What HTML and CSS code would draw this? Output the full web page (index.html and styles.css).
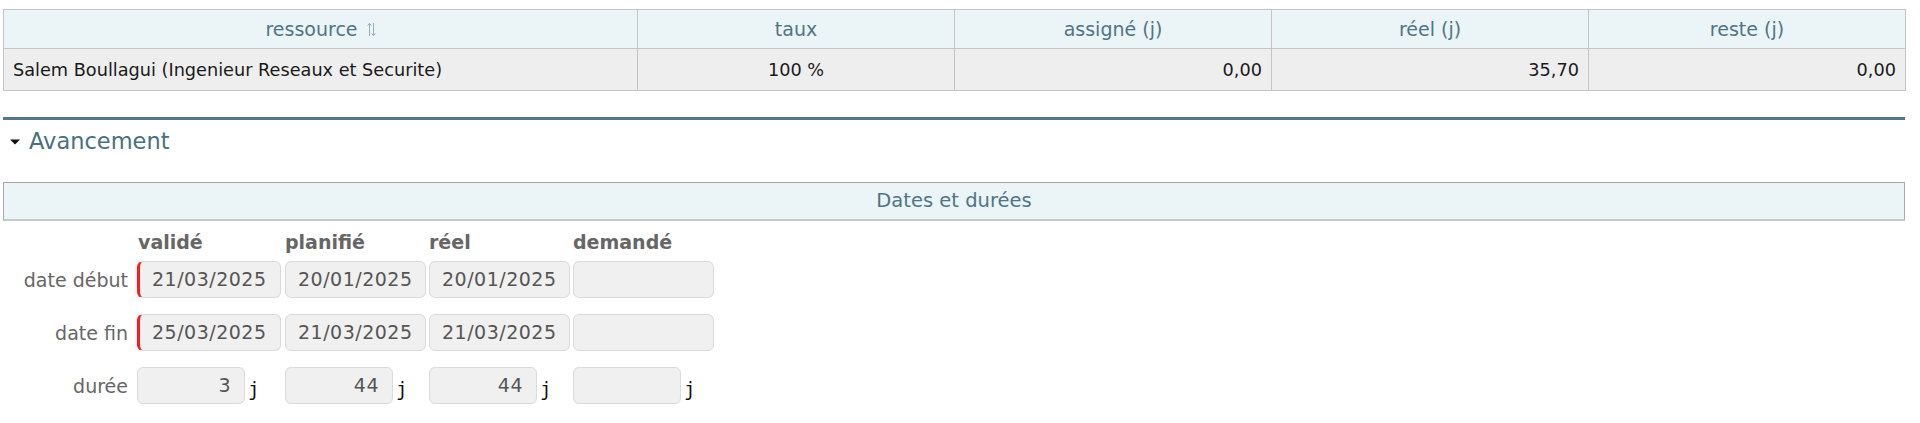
FILE: index.html
```html
<!DOCTYPE html>
<html lang="fr">
<head>
<meta charset="utf-8">
<title>Avancement</title>
<link rel="stylesheet" href="styles.css">
</head>
<body>
<div class="page">
  <table class="res">
    <thead>
      <tr>
        <th class="c-res">ressource<svg class="sort" width="9" height="15" viewBox="0 0 9 15"><path d="M2.5 1.5V14M0.6 3.6L2.5 1.3L4.4 3.6M6.5 1V13.5M4.6 11.4L6.5 13.7L8.4 11.4" fill="none" stroke="#98b0bb" stroke-width="1"/></svg></th>
        <th>taux</th>
        <th>assigné (j)</th>
        <th>réel (j)</th>
        <th>reste (j)</th>
      </tr>
    </thead>
    <tbody>
      <tr>
        <td class="left">Salem Boullagui (Ingenieur Reseaux et Securite)</td>
        <td class="center">100 %</td>
        <td class="right">0,00</td>
        <td class="right">35,70</td>
        <td class="right">0,00</td>
      </tr>
    </tbody>
  </table>

  <div class="sep"></div>

  <h2 class="section"><svg class="caret" width="10" height="6" viewBox="0 0 10 6"><polygon points="0,0.5 10,0.5 5,5.5" fill="#111"/></svg>Avancement</h2>

  <div class="boxhead">Dates et durées</div>

  <div class="form">
    <div class="frow head">
      <span></span>
      <span class="colh first">validé</span>
      <span class="colh">planifié</span>
      <span class="colh">réel</span>
      <span class="colh">demandé</span>
    </div>
    <div class="frow">
      <span class="lbl">date début</span>
      <span class="cell"><span class="inp date req">21/03/2025</span></span>
      <span class="cell"><span class="inp date">20/01/2025</span></span>
      <span class="cell"><span class="inp date">20/01/2025</span></span>
      <span class="cell"><span class="inp date"></span></span>
    </div>
    <div class="frow">
      <span class="lbl">date fin</span>
      <span class="cell"><span class="inp date req">25/03/2025</span></span>
      <span class="cell"><span class="inp date">21/03/2025</span></span>
      <span class="cell"><span class="inp date">21/03/2025</span></span>
      <span class="cell"><span class="inp date"></span></span>
    </div>
    <div class="frow">
      <span class="lbl">durée</span>
      <span class="cell"><span class="inp dur">3</span><span class="unit">j</span></span>
      <span class="cell"><span class="inp dur">44</span><span class="unit">j</span></span>
      <span class="cell"><span class="inp dur">44</span><span class="unit">j</span></span>
      <span class="cell"><span class="inp dur"></span><span class="unit">j</span></span>
    </div>
  </div>
</div>
</body>
</html>
```

FILE: styles.css
```css
html, body {
  margin: 0;
  padding: 0;
  background: #ffffff;
}

body {
  font-family: "DejaVu Sans", Verdana, sans-serif;
  color: #222;
}

.page {
  padding: 9px 15px 0 3px;
}

.res {
  width: 100%;
  border-collapse: collapse;
  table-layout: fixed;
}

.res th {
  height: 38px;
  padding: 0;
  background: #ebf4f7;
  color: #4f7585;
  font-weight: normal;
  font-size: 19px;
  border: 1px solid #c4c4c4;
  width: 316px;
}

.res th.c-res {
  width: 633px;
}

.sort {
  margin-left: 9px;
  vertical-align: -1px;
}

.res td {
  height: 41px;
  padding: 0 9px;
  background: #eeeeee;
  font-size: 17.7px;
  color: #1a1a1a;
  border: 1px solid #c4c4c4;
}

.res td.left { text-align: left; }
.res td.center { text-align: center; }
.res td.right { text-align: right; }

.sep {
  margin-top: 26px;
  height: 0;
  border-top: 3px solid #52788a;
}

.section {
  margin: 8px 0 0 0;
  font-size: 22.5px;
  line-height: 27px;
  font-weight: normal;
  color: #4a6f80;
  display: flex;
  align-items: center;
}

.caret {
  margin: 0 9px 0 7px;
}

.boxhead {
  margin-top: 27px;
  height: 36px;
  line-height: 36px;
  background: #ebf4f7;
  border: 1px solid #a9a9a9;
  border-bottom: 2px solid #c8c8c8;
  text-align: center;
  color: #4f7585;
  font-size: 19.5px;
}

.form {
  margin-top: 10px;
  display: flex;
  flex-direction: column;
  gap: 16px;
  font-size: 19px;
}

.frow {
  display: grid;
  grid-template-columns: 134px 148px 144px 144px 144px;
  align-items: center;
}

.frow.head {
  line-height: 23px;
  margin-bottom: -9px;
}

.colh {
  font-weight: bold;
  color: #666;
}

.colh.first {
  padding-left: 1px;
}

.lbl {
  text-align: right;
  padding-right: 9px;
  color: #666;
}

.cell {
  display: flex;
  align-items: center;
}

.inp {
  box-sizing: border-box;
  display: block;
  height: 37px;
  line-height: 35px;
  background: #f0f0f0;
  border: 1px solid #dadada;
  border-radius: 6px;
  color: #555;
  letter-spacing: 0.5px;
}

.inp.date {
  width: 141px;
  padding: 0 12px;
}

.inp.date.req {
  width: 144px;
  border-left: 3px solid #ff1a1a;
}

.inp.dur {
  width: 108px;
  padding: 0 13px;
  text-align: right;
}

.unit {
  font-family: "DejaVu Sans Mono", monospace;
  color: #111;
  margin-left: 3px;
  font-size: 19px;
  position: relative;
  top: 3px;
}
```
